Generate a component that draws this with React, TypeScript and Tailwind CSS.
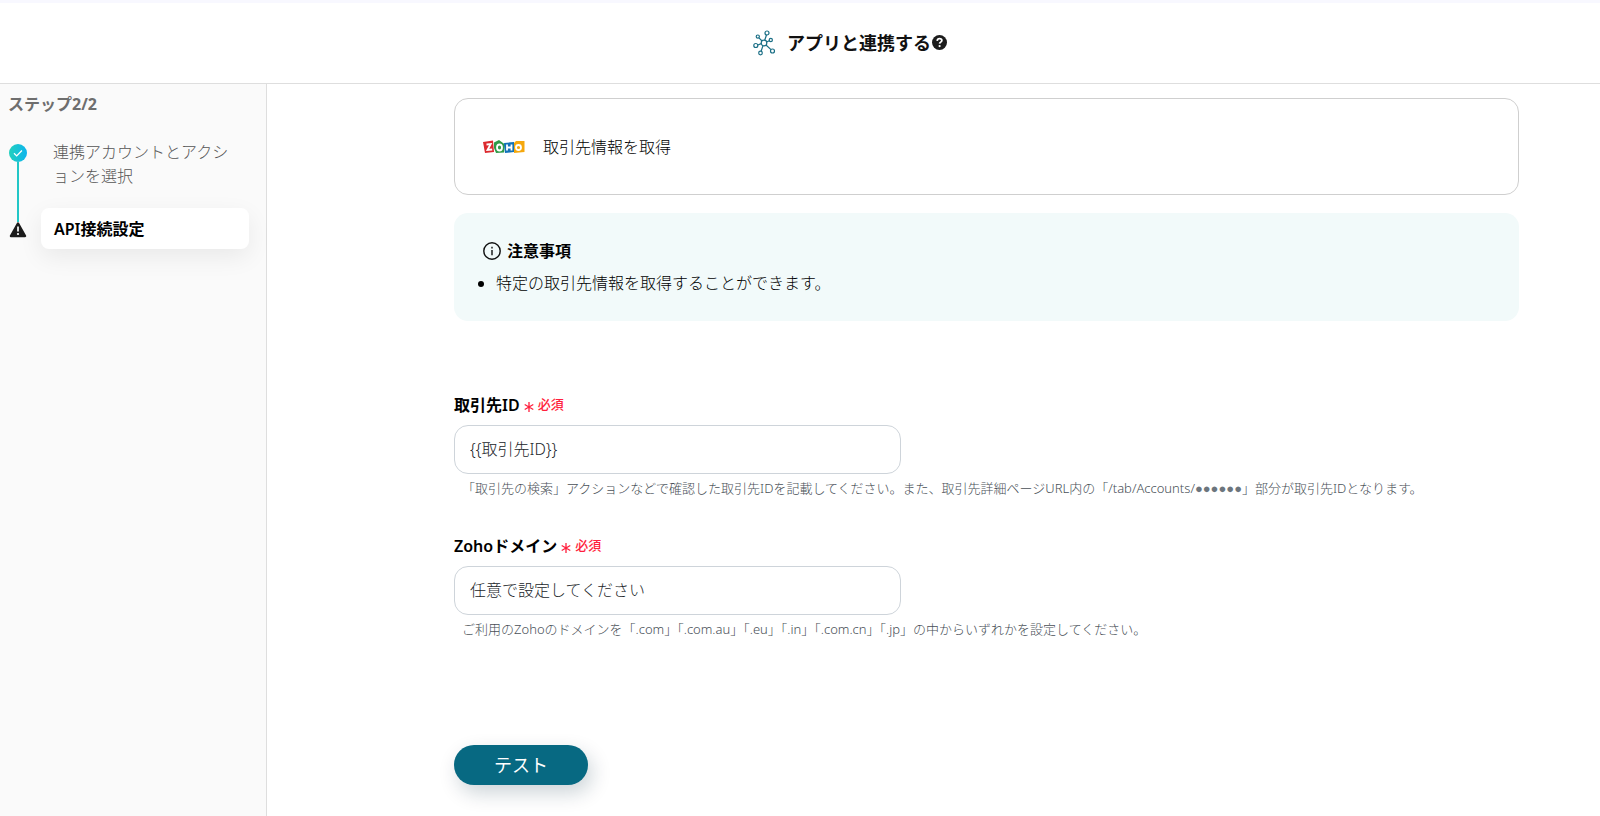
import { useState } from 'react'
import type { ReactNode } from 'react'

interface FieldProps {
  id: string
  label: string
  value: string
  help: ReactNode
  onChange: (value: string) => void
}

function NetworkIcon() {
  return (
    <svg viewBox="0 0 24 26" className="h-[26px] w-6" fill="none" stroke="#1b6f86" strokeWidth="1.2" aria-hidden="true">
      <circle cx="11" cy="13" r="2.8" />
      <circle cx="14" cy="3" r="2" />
      <circle cx="4.8" cy="6.6" r="1.6" />
      <circle cx="17.8" cy="10" r="1.6" />
      <circle cx="2.8" cy="15.5" r="2" />
      <circle cx="7.5" cy="23" r="1.8" />
      <circle cx="19.5" cy="21" r="2" />
      <path d="M11.7 10.3 13.5 5M9.1 11 5.9 7.8M13.6 12 16.3 10.7M8.3 13.6 4.8 15M10 15.6 8.1 21.3M13 15 18 19.6" />
    </svg>
  )
}

function HelpIcon() {
  return (
    <svg viewBox="0 0 16 16" className="h-[15px] w-[15px]" aria-hidden="true">
      <circle cx="8" cy="8" r="8" fill="#1c1c1c" />
      <path d="M5.5 6.2c.2-1.5 1.2-2.3 2.5-2.3 1.4 0 2.5.8 2.5 2 0 1.7-2.3 1.7-2.4 3.3" fill="none" stroke="#fff" strokeWidth="1.9" />
      <circle cx="8.1" cy="11.8" r="1.2" fill="#fff" />
    </svg>
  )
}

function ZohoLogo() {
  return (
    <svg viewBox="0 0 42 16" className="h-4 w-[42px]" role="img" aria-label="Zoho">
      <g fill="none" strokeWidth="1.8">
        <path d="M0 3 10 1.500l1 11.500-9 1z" fill="#dc2a2f" />
        <path d="M11 3.500 16 1l6 4.500-1 8-8 .5-2-5z" fill="#2f9a48" />
        <path d="M21 4 31 3v10l-9 1z" fill="#1272b9" />
        <path d="M31 4 33 2h8.500v11l-10.500 1z" fill="#f5a80e" />
        <path d="M3.500 5.500 7.700 5 4.500 11l4.700-.5" stroke="#fff" />
        <ellipse cx="16.500" cy="8.500" rx="2.500" ry="3" stroke="#fff" />
        <path d="M24 5.500v6M28.500 5.500v6M24 8.500h4.500" stroke="#fff" />
        <circle cx="35.500" cy="8.500" r="2.500" stroke="#fff" />
      </g>
    </svg>
  )
}

function StepDoneIcon() {
  return (
    <svg viewBox="0 0 18 18" className="h-[18px] w-[18px]" aria-hidden="true">
      <defs>
        <linearGradient id="done" x1="0" x2="1" y1="0" y2="0">
          <stop offset="0" stopColor="#22d0bd" />
          <stop offset="1" stopColor="#0db4ee" />
        </linearGradient>
      </defs>
      <circle cx="9" cy="9" r="9" fill="url(#done)" />
      <path d="m5 9.2 2.7 2.7 5.2-5.4" fill="none" stroke="#fff" strokeWidth="1.3" />
    </svg>
  )
}

function WarningIcon() {
  return (
    <svg viewBox="0 0 18 16" className="h-4 w-[18px]" aria-hidden="true">
      <path d="M9 1.5 16 14H2z" fill="#1c1c1c" stroke="#1c1c1c" strokeWidth="2.5" strokeLinejoin="round" />
      <path d="M9 4.5v5" stroke="#fff" strokeWidth="1.7" />
      <circle cx="9" cy="12" r="1.1" fill="#fff" />
    </svg>
  )
}

function InfoIcon() {
  return (
    <svg viewBox="0 0 18 18" className="h-[18px] w-[18px]" aria-hidden="true">
      <circle cx="9" cy="9" r="8.2" fill="none" stroke="#111" strokeWidth="1.4" />
      <path d="M9 8v5.2M9 4.8v1.6" stroke="#111" strokeWidth="1.4" />
    </svg>
  )
}

function Field({ id, label, value, help, onChange }: FieldProps) {
  return (
    <div>
      <label htmlFor={id} className="flex h-6 items-center gap-1 text-base font-semibold text-black">
        {label}
        <span className="flex items-center gap-1 text-[13px] font-medium text-[#ff1f3d]">
          <svg viewBox="0 0 10 10" className="mt-1 h-[10px] w-[10px]" stroke="currentColor" strokeWidth="1.3" aria-hidden="true">
            <path d="M5 0v10M.7 2.5l8.6 5M9.3 2.5l-8.6 5" />
          </svg>
          必須
        </span>
      </label>
      <input
        id={id}
        type="text"
        value={value}
        onChange={(e) => onChange(e.target.value)}
        className="mt-2 block h-[49px] w-[42%] rounded-[14px] border border-[#ced4da] bg-white px-[15px] pb-1 text-base font-light text-[#212529] focus:outline-none focus:ring-2 focus:ring-cyan-700"
      />
      <p className="mt-1 pl-2 text-[13px] leading-5 font-light text-[#495057]">{help}</p>
    </div>
  )
}

export default function App() {
  const [accountId, setAccountId] = useState('{{取引先ID}}')
  const [domain, setDomain] = useState('任意で設定してください')

  return (
    <div className="flex min-h-screen flex-col bg-white font-['Noto_Sans','Noto_Sans_CJK_JP',sans-serif] text-base text-[#212529]">
      <header className="flex h-[84px] items-center justify-center border-t-[3px] border-b border-t-[#f8f8ff] border-b-[#dedede] pb-px pl-[100px]">
        <NetworkIcon />
        <h1 className="ml-[10px] text-lg font-bold text-[#111]">アプリと連携する</h1>
        <button type="button" aria-label="ヘルプ" className="ml-px">
          <HelpIcon />
        </button>
      </header>

      <div className="flex flex-1">
        <aside className="w-[267px] shrink-0 border-r border-[#dedede] bg-[#fafafa] px-2 pt-2">
          <h2 className="text-base leading-6 font-bold text-[#6e6e6e]">ステップ2/2</h2>
          <ol className="mt-6 pl-px">
            <li className="flex">
              <div className="flex w-[18px] flex-col items-center pt-1">
                <StepDoneIcon />
                <div className="w-0.5 flex-1 bg-[#22c7c7]" />
              </div>
              <a href="#account" className="mb-5 ml-[26px] w-[184px] leading-6 font-light text-[#555]">
                連携アカウントとアクションを選択
              </a>
            </li>
            <li className="flex">
              <div className="flex w-[18px] flex-col items-center">
                <div className="h-[14px] w-0.5 bg-[#22c7c7]" />
                <WarningIcon />
              </div>
              <a
                href="#api"
                aria-current="step"
                className="ml-[14px] flex h-[41px] w-[208px] items-center rounded-lg bg-white px-[13px] font-semibold text-black shadow-[0_8px_24px_rgba(0,0,0,0.07)]"
              >
                API接続設定
              </a>
            </li>
          </ol>
        </aside>

        <main className="min-w-0 flex-1 pt-[14px] pr-[81px] pb-[30px] pl-[187px]">
          <section className="flex h-[97px] items-center rounded-[14px] border border-[#cfcfcf] px-7">
            <ZohoLogo />
            <span className="ml-[18px] font-light text-black">取引先情報を取得</span>
          </section>

          <section className="mt-[18px] h-[108px] rounded-[14px] bg-[#f2fafa] px-[29px] pt-[26px]">
            <h2 className="flex h-6 items-center gap-[6px] font-bold text-black">
              <InfoIcon />
              注意事項
            </h2>
            <ul className="mt-2 list-disc pl-[13px] leading-6 font-light text-black">
              <li>特定の取引先情報を取得することができます。</li>
            </ul>
          </section>

          <form className="mt-[72px]" onSubmit={(e) => e.preventDefault()}>
            <div className="flex flex-col gap-9">
              <Field
                id="account-id"
                label="取引先ID"
                value={accountId}
                onChange={setAccountId}
                help={
                  <>
                    「取引先の検索」アクションなどで確認した取引先IDを記載してください。また、取引先詳細ページURL内の「/tab/Accounts/
                    <span className="font-['Liberation_Sans',sans-serif] leading-none text-[#6c757d]">●●●●●●</span>
                    」部分が取引先IDとなります。
                  </>
                }
              />
              <Field
                id="zoho-domain"
                label="Zohoドメイン"
                value={domain}
                onChange={setDomain}
                help="ご利用のZohoのドメインを「.com」「.com.au」「.eu」「.in」「.com.cn」「.jp」の中からいずれかを設定してください。"
              />
            </div>
            <button
              type="submit"
              className="mt-[106px] h-10 w-[134px] rounded-full bg-[#076982] text-lg text-white shadow-[4px_8px_20px_rgba(0,40,60,0.2)]"
            >
              テスト
            </button>
          </form>
        </main>
      </div>
    </div>
  )
}
